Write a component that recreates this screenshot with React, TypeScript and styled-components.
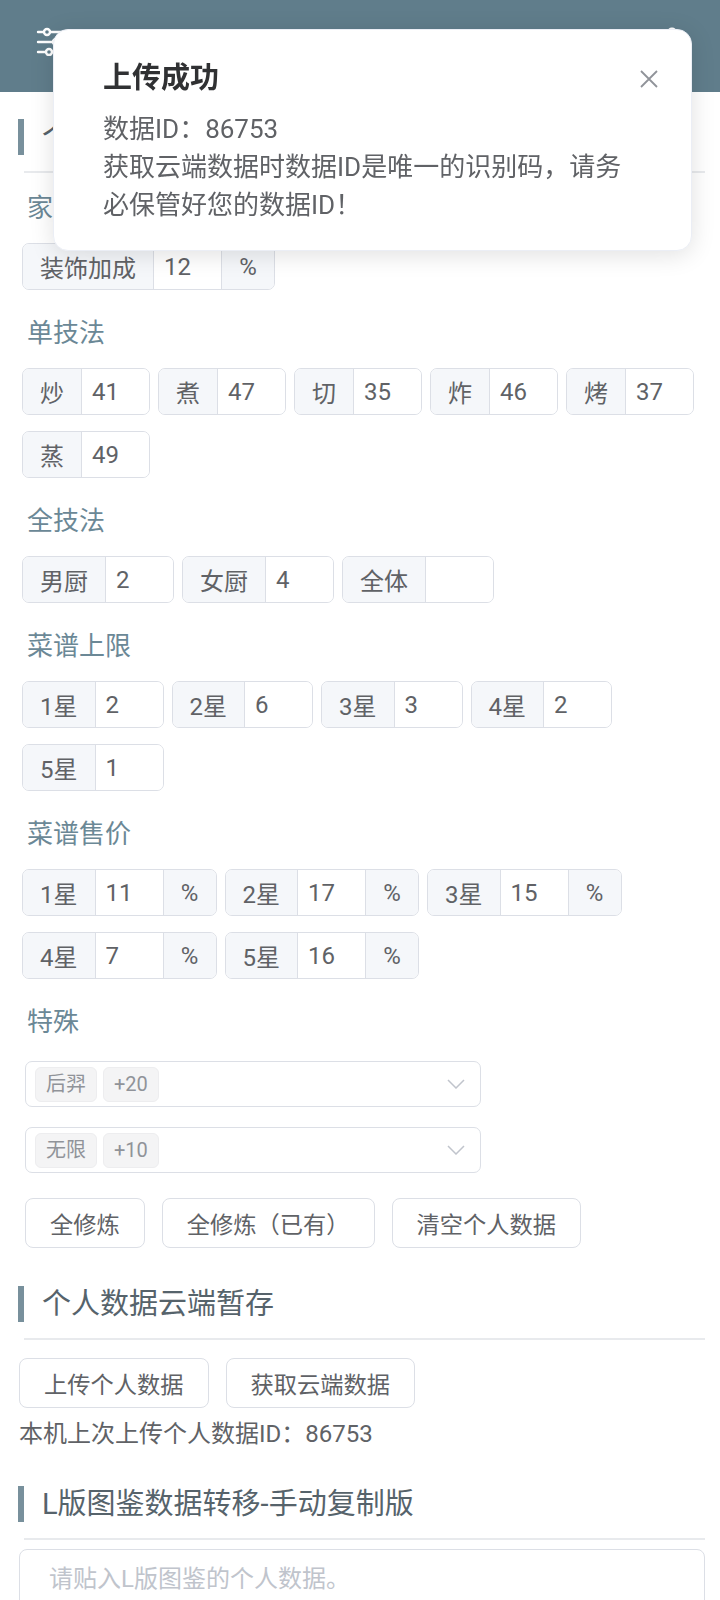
import React from "react";
import styled, { createGlobalStyle } from "styled-components";

const GlobalStyle = createGlobalStyle`
  * { box-sizing: border-box; }
  html, body { margin: 0; padding: 0; background: #ffffff; }
  body {
    font-family: Roboto, "Noto Sans CJK SC", sans-serif;
    color: #606266;
  }
`;

const FONT = `Roboto, "Noto Sans CJK SC", sans-serif`;

const Header = styled.header`
  height: 92px;
  background: #607d8b;
  display: flex;
  justify-content: space-between;
  align-items: flex-start;
  padding: 26px 31px 0 36px;
`;

const Main = styled.main`
  padding: 27px 15px 0 19px;
`;

const Section = styled.section<{ $top: number }>`
  margin-top: ${(p) => p.$top}px;
`;

const SectionHead = styled.div`
  display: flex;
  align-items: center;
  height: 36px;
`;

const Bar = styled.span`
  width: 6px;
  height: 36px;
  margin-left: -1px;
  background: #78909c;
`;

const SectionTitle = styled.h2`
  margin: 0 0 0 18px;
  font-size: 29px;
  line-height: 36px;
  font-weight: 400;
  color: #56636b;
`;

const Divider = styled.div`
  height: 2px;
  margin: 16px 0 0 5px;
  background: #e8eaed;
`;

const FormBody = styled.div`
  margin-top: 15px;
  padding-left: 3px;
`;

const Block = styled.div`
  margin-bottom: 23px;
`;

const FieldLabel = styled.div`
  height: 40px;
  line-height: 40px;
  font-size: 26px;
  color: #6b8896;
  padding-left: 5px;
  margin-bottom: 15px;
`;

const Row = styled.div`
  display: flex;
  flex-wrap: wrap;
  gap: 16px 8px;
`;

const Group = styled.div`
  display: inline-flex;
  height: 47px;
  border: 1px solid #dcdfe6;
  border-radius: 7px;
  overflow: hidden;
  background: #ffffff;
`;

const Addon = styled.span<{ $side: "pre" | "post" }>`
  display: flex;
  align-items: center;
  justify-content: center;
  background: #f5f7fa;
  color: #606266;
  font-size: 24px;
  padding: ${(p) => (p.$side === "pre" ? "0 17px" : "0")};
  width: ${(p) => (p.$side === "post" ? "53px" : "auto")};
  border-right: ${(p) => (p.$side === "pre" ? "1px solid #dcdfe6" : "none")};
  border-left: ${(p) => (p.$side === "post" ? "1px solid #dcdfe6" : "none")};
  white-space: nowrap;
`;

const Field = styled.input`
  width: 67px;
  border: none;
  outline: none;
  padding: 0 10px;
  font-family: ${FONT};
  font-size: 24px;
  color: #606266;
  background: #ffffff;
`;

const SelectStack = styled.div`
  display: flex;
  flex-direction: column;
  gap: 20px;
  margin-top: 19px;
  padding-left: 3px;
`;

const Select = styled.div`
  width: 456px;
  height: 46px;
  border: 1px solid #dcdfe6;
  border-radius: 7px;
  display: flex;
  align-items: center;
  gap: 6px;
  padding: 0 15px 0 9px;
`;

const Tag = styled.span`
  height: 35px;
  line-height: 33px;
  padding: 0 10px;
  background: #f4f4f5;
  border: 1px solid #ededef;
  border-radius: 6px;
  color: #909399;
  font-size: 20px;
`;

const Chevron = styled.svg`
  margin-left: auto;
`;

const ButtonRow = styled.div<{ $top: number; $indent: number }>`
  display: flex;
  gap: 17px;
  margin-top: ${(p) => p.$top}px;
  padding-left: ${(p) => p.$indent}px;
`;

const Button = styled.button`
  height: 50px;
  padding: 0 24px;
  border: 1px solid #dcdfe6;
  border-radius: 8px;
  background: #ffffff;
  color: #606266;
  font-family: ${FONT};
  font-size: 23.25px;
  white-space: nowrap;
`;

const InfoText = styled.div`
  margin-top: 8px;
  font-size: 24px;
  line-height: 36px;
  color: #606266;
`;

const TextArea = styled.textarea`
  display: block;
  width: 100%;
  height: 160px;
  margin-top: 9px;
  border: 1px solid #dcdfe6;
  border-radius: 8px;
  padding: 11px 29px;
  font-family: ${FONT};
  font-size: 24px;
  line-height: 36px;
  color: #606266;
  resize: none;
  outline: none;
  &::placeholder {
    color: #c0c4cc;
  }
`;

const Notification = styled.div`
  position: fixed;
  top: 29px;
  left: 53px;
  width: 639px;
  padding: 26px 49px;
  background: #ffffff;
  border: 1px solid #ebeef5;
  border-radius: 15px;
  box-shadow: 0 4px 24px rgba(0, 0, 0, 0.12);
  z-index: 10;
`;

const NotifTitle = styled.h3`
  margin: 0;
  font-size: 29px;
  line-height: 44px;
  font-weight: 700;
  color: #303133;
`;

const NotifContent = styled.p`
  margin: 10px 0 0;
  max-width: 532px;
  font-size: 26px;
  line-height: 38px;
  color: #606266;
`;

const CloseBtn = styled.svg`
  position: absolute;
  top: 39px;
  right: 32px;
`;

type G = { label: string; value: string; suffix?: string };

const InputGroup = ({ label, value, suffix }: G) => (
  <Group>
    <Addon $side="pre">{label}</Addon>
    <Field defaultValue={value} />
    {suffix ? <Addon $side="post">{suffix}</Addon> : null}
  </Group>
);

const FieldBlock = ({ title, items }: { title: string; items: G[] }) => (
  <Block>
    <FieldLabel>{title}</FieldLabel>
    <Row>
      {items.map((it, i) => (
        <InputGroup key={i} {...it} />
      ))}
    </Row>
  </Block>
);

const SectionHeader = ({ title }: { title: string }) => (
  <>
    <SectionHead>
      <Bar />
      <SectionTitle>{title}</SectionTitle>
    </SectionHead>
    <Divider />
  </>
);

const ChevronDown = () => (
  <Chevron width="18" height="10" viewBox="0 0 18 10">
    <polyline points="1,1 9,9 17,1" fill="none" stroke="#c0c4cc" strokeWidth="1.5" />
  </Chevron>
);

const blocks: { title: string; items: G[] }[] = [
  { title: "家具", items: [{ label: "装饰加成", value: "12", suffix: "%" }] },
  {
    title: "单技法",
    items: [
      { label: "炒", value: "41" },
      { label: "煮", value: "47" },
      { label: "切", value: "35" },
      { label: "炸", value: "46" },
      { label: "烤", value: "37" },
      { label: "蒸", value: "49" },
    ],
  },
  {
    title: "全技法",
    items: [
      { label: "男厨", value: "2" },
      { label: "女厨", value: "4" },
      { label: "全体", value: "" },
    ],
  },
  {
    title: "菜谱上限",
    items: [
      { label: "1星", value: "2" },
      { label: "2星", value: "6" },
      { label: "3星", value: "3" },
      { label: "4星", value: "2" },
      { label: "5星", value: "1" },
    ],
  },
  {
    title: "菜谱售价",
    items: [
      { label: "1星", value: "11", suffix: "%" },
      { label: "2星", value: "17", suffix: "%" },
      { label: "3星", value: "15", suffix: "%" },
      { label: "4星", value: "7", suffix: "%" },
      { label: "5星", value: "16", suffix: "%" },
    ],
  },
];

export default function App() {
  return (
    <>
      <GlobalStyle />
      <Header>
        <svg width="30" height="30" viewBox="0 0 30 30" fill="none" stroke="#ffffff" strokeWidth="2.4" strokeLinecap="round">
          <line x1="2" y1="6" x2="28" y2="6" />
          <line x1="2" y1="16" x2="28" y2="16" />
          <line x1="2" y1="26" x2="28" y2="26" />
          <circle cx="11" cy="6" r="3" fill="#607d8b" />
          <circle cx="20" cy="16" r="3" fill="#607d8b" />
          <circle cx="13" cy="26" r="3" fill="#607d8b" />
        </svg>
        <svg width="34" height="34" viewBox="0 0 24 24" fill="none" stroke="#ffffff" strokeWidth="2" strokeLinecap="round" strokeLinejoin="round">
          <path d="M12.22 2h-.44a2 2 0 0 0-2 2v.18a2 2 0 0 1-1 1.73l-.43.25a2 2 0 0 1-2 0l-.15-.08a2 2 0 0 0-2.73.73l-.22.38a2 2 0 0 0 .73 2.73l.15.1a2 2 0 0 1 1 1.72v.51a2 2 0 0 1-1 1.74l-.15.09a2 2 0 0 0-.73 2.73l.22.38a2 2 0 0 0 2.73.73l.15-.08a2 2 0 0 1 2 0l.43.25a2 2 0 0 1 1 1.73V20a2 2 0 0 0 2 2h.44a2 2 0 0 0 2-2v-.18a2 2 0 0 1 1-1.73l.43-.25a2 2 0 0 1 2 0l.15.08a2 2 0 0 0 2.73-.73l.22-.39a2 2 0 0 0-.73-2.73l-.15-.08a2 2 0 0 1-1-1.74v-.5a2 2 0 0 1 1-1.74l.15-.09a2 2 0 0 0 .73-2.73l-.22-.38a2 2 0 0 0-2.73-.73l-.15.08a2 2 0 0 1-2 0l-.43-.25a2 2 0 0 1-1-1.73V4a2 2 0 0 0-2-2z" />
          <circle cx="12" cy="12" r="3" />
        </svg>
      </Header>

      <Main>
        <Section $top={0}>
          <SectionHeader title="个人数据" />
          <FormBody>
            {blocks.map((b) => (
              <FieldBlock key={b.title} title={b.title} items={b.items} />
            ))}
            <div>
              <FieldLabel>特殊</FieldLabel>
              <SelectStack>
                <Select>
                  <Tag>后羿</Tag>
                  <Tag>+20</Tag>
                  <ChevronDown />
                </Select>
                <Select>
                  <Tag>无限</Tag>
                  <Tag>+10</Tag>
                  <ChevronDown />
                </Select>
              </SelectStack>
              <ButtonRow $top={25} $indent={3}>
                <Button>全修炼</Button>
                <Button>全修炼（已有）</Button>
                <Button>清空个人数据</Button>
              </ButtonRow>
            </div>
          </FormBody>
        </Section>

        <Section $top={38}>
          <SectionHeader title="个人数据云端暂存" />
          <ButtonRow $top={18} $indent={0}>
            <Button>上传个人数据</Button>
            <Button>获取云端数据</Button>
          </ButtonRow>
          <InfoText>本机上次上传个人数据ID：86753</InfoText>
        </Section>

        <Section $top={34}>
          <SectionHeader title="L版图鉴数据转移-手动复制版" />
          <TextArea placeholder="请贴入L版图鉴的个人数据。" />
        </Section>
      </Main>

      <Notification>
        <NotifTitle>上传成功</NotifTitle>
        <NotifContent>
          数据ID：86753
          <br />
          获取云端数据时数据ID是唯一的识别码，请务必保管好您的数据ID！
        </NotifContent>
        <CloseBtn width="20" height="20" viewBox="0 0 20 20">
          <path d="M2 2 L18 18 M18 2 L2 18" stroke="#909399" strokeWidth="1.8" fill="none" />
        </CloseBtn>
      </Notification>
    </>
  );
}
